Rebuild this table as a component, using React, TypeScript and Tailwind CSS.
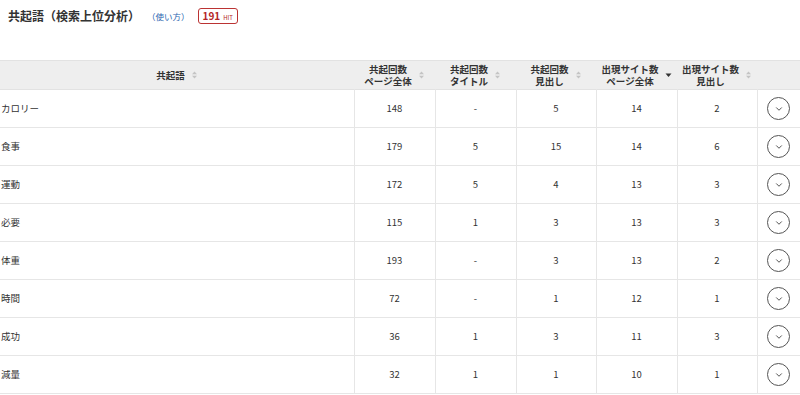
import { ChevronDown } from "lucide-react";

interface Row {
  word: string;
  pageAll: number;
  title: string;
  heading: number;
  sitePage: number;
  siteHeading: number;
}

const rows: Row[] = [
  { word: "カロリー", pageAll: 148, title: "-", heading: 5, sitePage: 14, siteHeading: 2 },
  { word: "食事", pageAll: 179, title: "5", heading: 15, sitePage: 14, siteHeading: 6 },
  { word: "運動", pageAll: 172, title: "5", heading: 4, sitePage: 13, siteHeading: 3 },
  { word: "必要", pageAll: 115, title: "1", heading: 3, sitePage: 13, siteHeading: 3 },
  { word: "体重", pageAll: 193, title: "-", heading: 3, sitePage: 13, siteHeading: 2 },
  { word: "時間", pageAll: 72, title: "-", heading: 1, sitePage: 12, siteHeading: 1 },
  { word: "成功", pageAll: 36, title: "1", heading: 3, sitePage: 11, siteHeading: 3 },
  { word: "減量", pageAll: 32, title: "1", heading: 1, sitePage: 10, siteHeading: 1 },
];

function SortIcon({ active }: { active?: boolean }) {
  if (active) {
    return (
      <svg width="7" height="8" viewBox="0 0 7 8" className="shrink-0">
        <path d="M0.5 2.5h6l-3 3.5z" fill="#333" />
      </svg>
    );
  }
  return (
    <svg width="7" height="8" viewBox="0 0 7 8" className="shrink-0">
      <path d="M1 3.3h5L3.5 0.6z" fill="#c4c4c4" />
      <path d="M1 4.7h5L3.5 7.4z" fill="#c4c4c4" />
    </svg>
  );
}

function HeadCell({ lines, active }: { lines: string[]; active?: boolean }) {
  return (
    <th className="p-0 font-bold">
      <div className="flex items-center justify-center gap-[6px]">
        <div className="flex flex-col items-center leading-[12px]">
          {lines.map((l) => (
            <span key={l}>{l}</span>
          ))}
        </div>
        <SortIcon active={active} />
      </div>
    </th>
  );
}

export default function App() {
  return (
    <div
      className="w-[800px] h-[395px] overflow-hidden bg-white text-[#333]"
      style={{ fontFamily: '"Noto Sans CJK JP", "Noto Sans", sans-serif' }}
    >
      <div className="flex items-center h-[31px] pl-[8px] pt-[1px]">
        <h1 className="text-[12px] font-bold">共起語（検索上位分析）</h1>
        <span className="ml-[7px] text-[8.5px] text-[#2a66b0]">（使い方）</span>
        <span className="ml-[8px] flex items-baseline gap-[3px] h-[16px] px-[4px] border border-[#b33] rounded-[3px] text-[#b32626]">
          <span className="text-[10px] font-bold leading-[14px]">191</span>
          <span className="text-[6px] leading-[14px]">HIT</span>
        </span>
      </div>

      <table className="mt-[29px] w-[800px] table-fixed border-collapse text-[9.5px]">
        <colgroup>
          <col className="w-[354px]" />
          <col className="w-[81px]" />
          <col className="w-[81px]" />
          <col className="w-[80px]" />
          <col className="w-[81px]" />
          <col className="w-[80px]" />
          <col className="w-[43px]" />
        </colgroup>
        <thead>
          <tr className="h-[29px] bg-[#eeeeee] border-y border-[#e2e2e2]">
            <HeadCell lines={["共起語"]} />
            <HeadCell lines={["共起回数", "ページ全体"]} />
            <HeadCell lines={["共起回数", "タイトル"]} />
            <HeadCell lines={["共起回数", "見出し"]} />
            <HeadCell lines={["出現サイト数", "ページ全体"]} active />
            <HeadCell lines={["出現サイト数", "見出し"]} />
            <th className="p-0" />
          </tr>
        </thead>
        <tbody>
          {rows.map((r) => (
            <tr key={r.word} className="h-[38px] border-b border-[#e6e6e6]">
              <td className="pl-[1px] text-left">{r.word}</td>
              <td className="text-center border-l border-[#e6e6e6]">{r.pageAll}</td>
              <td className="text-center border-l border-[#e6e6e6]">{r.title}</td>
              <td className="text-center border-l border-[#e6e6e6]">{r.heading}</td>
              <td className="text-center border-l border-[#e6e6e6]">{r.sitePage}</td>
              <td className="text-center border-l border-[#e6e6e6]">{r.siteHeading}</td>
              <td className="border-l border-[#e6e6e6]">
                <div className="flex justify-center">
                  <button className="flex items-center justify-center w-[23px] h-[23px] rounded-full border border-[#555] bg-white">
                    <ChevronDown size={10} strokeWidth={2.2} color="#444" />
                  </button>
                </div>
              </td>
            </tr>
          ))}
        </tbody>
      </table>
    </div>
  );
}
